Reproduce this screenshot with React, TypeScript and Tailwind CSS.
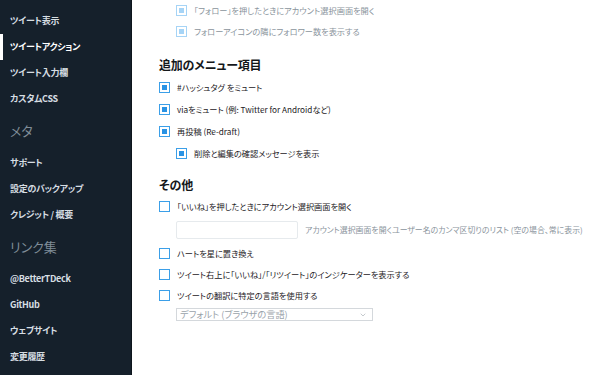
import { ChevronDown } from 'lucide-react';

const font = { fontFamily: '"Noto Sans CJK JP", "Noto Sans", sans-serif', fontFeatureSettings: '"palt"' };

type NavItem = { label: string; header?: boolean; active?: boolean };

const nav: NavItem[] = [
  { label: 'ツイート表示' },
  { label: 'ツイートアクション', active: true },
  { label: 'ツイート入力欄' },
  { label: 'カスタムCSS' },
  { label: 'メタ', header: true },
  { label: 'サポート' },
  { label: '設定のバックアップ' },
  { label: 'クレジット / 概要' },
  { label: 'リンク集', header: true },
  { label: '@BetterTDeck' },
  { label: 'GitHub' },
  { label: 'ウェブサイト' },
  { label: '変更履歴' },
];

function Checkbox({ checked, disabled }: { checked?: boolean; disabled?: boolean }) {
  return (
    <span
      className={`flex h-[11px] w-[11px] shrink-0 items-center justify-center border ${
        disabled ? 'border-[#a6d4f6]' : 'border-[#3b9fe8]'
      } bg-white`}
    >
      {checked && <span className={`h-[5px] w-[5px] ${disabled ? 'bg-[#a6d4f6]' : 'bg-[#2a93e4]'}`} />}
    </span>
  );
}

function Row({
  label,
  checked,
  disabled,
  sub,
  h = 'h-[22px]',
}: {
  label: string;
  checked?: boolean;
  disabled?: boolean;
  sub?: boolean;
  h?: string;
}) {
  return (
    <div className={`flex ${h} items-center gap-[7px] ${sub ? 'pl-[17px]' : ''}`}>
      <Checkbox checked={checked} disabled={disabled} />
      <span className={`text-[8.2px] ${disabled ? 'text-[#8a949c]' : 'text-[#1c2024]'}`}>{label}</span>
    </div>
  );
}

export default function App() {
  return (
    <div className="flex h-[375px] w-[596px] overflow-hidden bg-white" style={font}>
      <aside className="flex w-[132px] shrink-0 flex-col border-r border-[#0e151c] bg-[#15202b] pt-[8px]">
        {nav.map((item) =>
          item.header ? (
            <div key={item.label} className="flex h-[38px] items-center pl-[10px] text-[13px] text-[#7f8c97]">
              {item.label}
            </div>
          ) : (
            <div
              key={item.label}
              className={`relative flex h-[26px] items-center pl-[10px] text-[9px] font-bold tracking-[-0.3px] ${
                item.active ? 'text-white' : 'text-[#d6dde2]'
              }`}
            >
              {item.active && <span className="absolute left-0 top-0 h-full w-[3px] bg-white" />}
              {item.label}
            </div>
          )
        )}
      </aside>

      <main className="flex flex-1 flex-col pl-[27px]">
        <Row label="「フォロー」を押したときにアカウント選択画面を開く" checked disabled sub h="h-[21px]" />
        <Row label="フォローアイコンの隣にフォロワー数を表示する" checked disabled sub h="h-[21px]" />

        <h2 className="mt-[12px] flex h-[22px] items-center text-[12px] font-bold tracking-[-0.2px] text-[#14171a]">
          追加のメニュー項目
        </h2>
        <Row label="#ハッシュタグ をミュート" checked />
        <Row label="viaをミュート (例: Twitter for Androidなど)" checked />
        <Row label="再投稿 (Re-draft)" checked />
        <Row label="削除と編集の確認メッセージを表示" checked sub />

        <h2 className="mt-[11px] flex h-[20px] items-center text-[12px] font-bold tracking-[-0.2px] text-[#14171a]">
          その他
        </h2>
        <Row label="「いいね」を押したときにアカウント選択画面を開く" />
        <div className="mt-[4px] flex items-center gap-[7px] pl-[17px]">
          <div className="h-[18px] w-[122px] rounded-[2px] border border-[#e6eaed] bg-white" />
          <span className="text-[7.9px] text-[#8a949c]">
            アカウント選択画面を開くユーザー名のカンマ区切りのリスト (空の場合、常に表示)
          </span>
        </div>
        <div className="mt-[3px]">
          <Row label="ハートを星に置き換え" />
          <Row label="ツイート右上に「いいね」/「リツイート」のインジケーターを表示する" h="h-[21px]" />
          <Row label="ツイートの翻訳に特定の言語を使用する" h="h-[21px]" />
        </div>
        <div className="mt-[2px] pl-[17px]">
          <div className="flex h-[13px] w-[197px] items-center justify-between border border-[#d4d8dc] bg-white pl-[3px] pr-[5px] text-[9.2px] text-[#9aa3aa]">
            <span>デフォルト (ブラウザの言語)</span>
            <ChevronDown size={8} strokeWidth={1.5} className="text-[#8a949c]" />
          </div>
        </div>
      </main>
    </div>
  );
}
